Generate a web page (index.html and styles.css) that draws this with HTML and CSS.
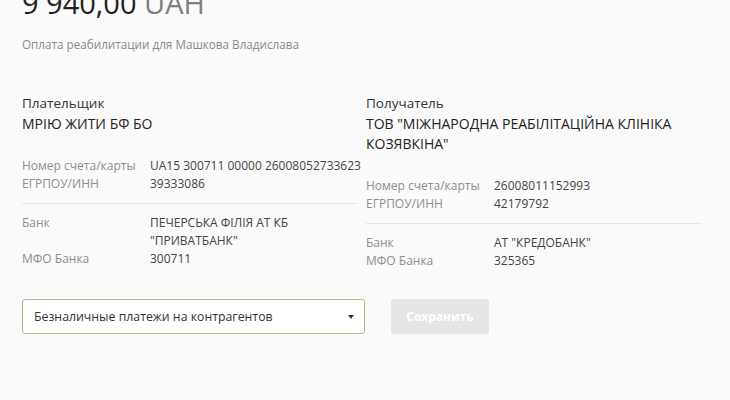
FILE: index.html
```html
<!DOCTYPE html>
<html lang="ru">
<head>
  <meta charset="UTF-8">
  <title>Платеж</title>
  <link rel="stylesheet" href="styles.css">
</head>
<body>

<div class="payment">
  <h1 class="amount">9 940,00 <span class="currency">UAH</span></h1>
  <p class="purpose">Оплата реабилитации для Машкова Владислава</p>

  <div class="parties">
    <div class="party">
      <div class="party-role">Плательщик</div>
      <div class="party-name">МРІЮ ЖИТИ БФ БО</div>
      <div class="details">
        <span class="label">Номер счета/карты</span><span class="value nowrap">UA15 300711 00000 26008052733623</span>
        <span class="label">ЕГРПОУ/ИНН</span><span class="value">39333086</span>
      </div>
      <div class="details bank">
        <span class="label">Банк</span><span class="value">ПЕЧЕРСЬКА ФІЛІЯ АТ КБ "ПРИВАТБАНК"</span>
        <span class="label">МФО Банка</span><span class="value">300711</span>
      </div>
    </div>

    <div class="party">
      <div class="party-role">Получатель</div>
      <div class="party-name">ТОВ "МІЖНАРОДНА РЕАБІЛІТАЦІЙНА КЛІНІКА КОЗЯВКІНА"</div>
      <div class="details">
        <span class="label">Номер счета/карты</span><span class="value nowrap">26008011152993</span>
        <span class="label">ЕГРПОУ/ИНН</span><span class="value">42179792</span>
      </div>
      <div class="details bank">
        <span class="label">Банк</span><span class="value">АТ "КРЕДОБАНК"</span>
        <span class="label">МФО Банка</span><span class="value">325365</span>
      </div>
    </div>
  </div>

  <div class="actions">
    <div class="select">
      <span>Безналичные платежи на контрагентов</span>
      <span class="caret"></span>
    </div>
    <button class="save" disabled>Сохранить</button>
  </div>
</div>

</body>
</html>
```

FILE: styles.css
```css
body {
  margin: 0;
  background-color: #fafafa;
  font-family: 'Open Sans', 'Noto Sans', sans-serif;
  color: #333;
}

.payment {
  padding: 0 20px 0 22px;
}

.amount {
  margin: -15px 0 0;
  font-size: 29px;
  line-height: 36px;
  font-weight: 400;
  color: #222;
}

.currency {
  color: #808080;
}

.purpose {
  margin: 14px 0 0;
  font-size: 11.7px;
  line-height: 18px;
  color: #8a8a8a;
}

.parties {
  display: grid;
  grid-template-columns: 344px 1fr;
  margin-top: 39px;
}

.party {
  padding-right: 8px;
}

.party-role {
  font-size: 13.5px;
  line-height: 22px;
  color: #333;
}

.party-name {
  font-size: 14px;
  line-height: 20px;
  color: #222;
  padding-right: 20px;
}

.details {
  display: grid;
  grid-template-columns: 128px 1fr;
  font-size: 12px;
  line-height: 18px;
  margin-top: 23px;
  padding-bottom: 10px;
  border-bottom: 1px solid #e6e6e6;
}

.details.bank {
  margin-top: 0;
  padding-top: 10px;
  border-bottom: none;
}

.label {
  color: #8e8e8e;
}

.value {
  color: #444;
}

.nowrap {
  white-space: nowrap;
}

.actions {
  display: flex;
  align-items: center;
  gap: 26px;
  margin-top: 19px;
}

.select {
  width: 343px;
  height: 35px;
  box-sizing: border-box;
  display: flex;
  align-items: center;
  justify-content: space-between;
  padding: 0 10px 0 11px;
  background-color: #fff;
  border: 1px solid #a9bd8c;
  border-radius: 3px;
  font-size: 12.3px;
  color: #333;
}

.caret {
  width: 0;
  height: 0;
  border-left: 3px solid transparent;
  border-right: 3px solid transparent;
  border-top: 4px solid #333;
}

.save {
  width: 98px;
  height: 35px;
  border: none;
  border-radius: 2px;
  background-color: #e6e6e6;
  color: #fff;
  font-family: inherit;
  font-size: 12px;
  font-weight: 700;
}
```
